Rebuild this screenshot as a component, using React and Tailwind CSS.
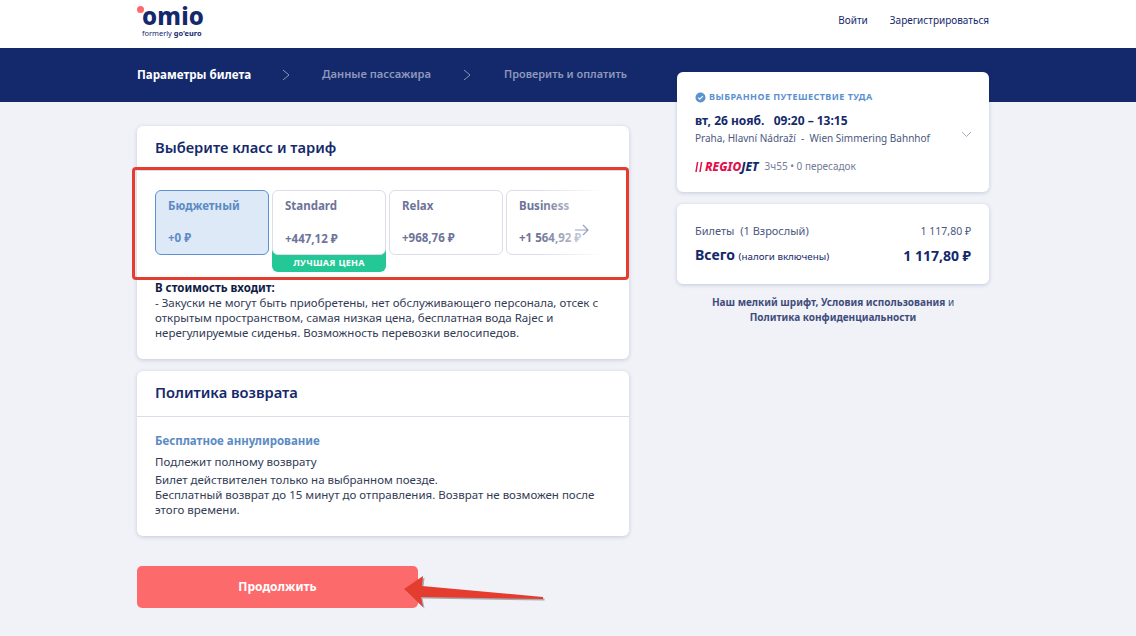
const font = { fontFamily: '"Noto Sans", sans-serif' };

const Fare = ({ name, price, active, best }) => {
  return (
    <div className="relative w-[114px] shrink-0">
      {best && (
        <div className="absolute left-0 top-[40px] w-full h-[42px] rounded-[6px] bg-[#24c796] flex items-end justify-center pb-[2px] text-[9px] leading-[14px] font-bold tracking-[0.3px] text-white">
          ЛУЧШАЯ ЦЕНА
        </div>
      )}
      <div
        className={`relative h-[65px] rounded-[6px] border pl-[12px] pt-[7px] text-[11.5px] font-bold ${
          active
            ? "bg-[#dde9f7] border-[#5c92cf] text-[#5c8ac4]"
            : "bg-white border-[#dcdde9] text-[#6d7499]"
        }`}
      >
        <div className="leading-[16px]">{name}</div>
        <div className={`leading-[16px] whitespace-nowrap ${best ? "mt-[17px]" : "mt-[16px]"}`}>{price}</div>
      </div>
    </div>
  );
};

export default function App() {
  return (
    <div style={font} className="relative w-[1136px] h-[636px] overflow-hidden bg-[#f0f2f7] text-[#14296b]">
      <header className="h-[48px] bg-white">
        <div className="mx-[137px] w-[852px] h-full flex justify-between">
          <div className="relative w-[80px] pt-[5px]">
            <span className="absolute left-0 top-[6px] w-[7px] h-[7px] rounded-full bg-[#fc6a6c]" />
            <div className="pl-[5px] text-[24px] leading-[22px] font-extrabold tracking-[0.2px]">omio</div>
            <div className="pl-[5px] mt-[1px] text-[7.4px] leading-[10px] whitespace-nowrap">
              formerly <b>go'euro</b>
            </div>
          </div>
          <nav className="flex items-center gap-[22px] text-[10px] pb-[7px]">
            <span>Войти</span>
            <span>Зарегистрироваться</span>
          </nav>
        </div>
      </header>

      <div className="h-[54px] bg-[#14296b]">
        <div className="mx-[137px] h-full flex items-center text-[10.9px] font-semibold pb-[1px]">
          <span className="w-[145px] text-[11.6px] font-bold text-white">Параметры билета</span>
          <svg width="8" height="12" viewBox="0 0 8 12" fill="none" stroke="#8a96bb" strokeWidth="1">
            <path d="M1 1l6 5-6 5" />
          </svg>
          <span className="ml-[32px] w-[141px] text-[11.2px] text-[#8d98bb]">Данные пассажира</span>
          <svg width="8" height="12" viewBox="0 0 8 12" fill="none" stroke="#8a96bb" strokeWidth="1">
            <path d="M1 1l6 5-6 5" />
          </svg>
          <span className="ml-[33px] text-[#8d98bb]">Проверить и оплатить</span>
        </div>
      </div>

      <div className="mx-[137px] w-[852px] flex justify-between items-start">
        <main className="w-[492px] pt-[24px]">
          <section className="h-[233px] rounded-[6px] bg-white shadow-[0_1px_4px_rgba(20,41,107,0.2)]">
            <h2 className="h-[45px] pl-[18px] pb-[2px] flex items-center text-[14.7px] font-semibold border-b border-[#dcdde9]">
              Выберите класс и тариф
            </h2>
            <div className="relative pl-[18px] pt-[19px] flex gap-[3px] overflow-hidden w-[468px] h-[110px]">
              <Fare name="Бюджетный" price="+0 ₽" active />
              <Fare name="Standard" price="+447,12 ₽" best />
              <Fare name="Relax" price="+968,76 ₽" />
              <Fare name="Business" price="+1 564,92 ₽" />
              <div className="absolute right-0 top-[19px] w-[66px] h-[65px] bg-gradient-to-r from-white/0 to-white" />
              <svg className="absolute left-[438px] top-[53px]" width="14" height="12" viewBox="0 0 14 12" fill="none" stroke="#9aa0bd" strokeWidth="1.2">
                <path d="M0 6h13M8 1l5 5-5 5" />
              </svg>
            </div>
            <div className="pl-[18px] pr-[20px] mt-[-1px] text-[11.5px] leading-[15px]">
              <div className="font-bold text-[#0f1c45]">В стоимость входит:</div>
              <p className="text-[#333b55]">
                - Закуски не могут быть приобретены, нет обслуживающего персонала, отсек с открытым пространством, самая низкая цена, бесплатная вода Rajec и нерегулируемые сиденья. Возможность перевозки велосипедов.
              </p>
            </div>
          </section>

          <section className="mt-[12px] h-[165px] rounded-[6px] bg-white shadow-[0_1px_4px_rgba(20,41,107,0.2)]">
            <h2 className="h-[46px] pl-[18px] pb-[2px] flex items-center text-[14.7px] font-semibold border-b border-[#dcdde9]">
              Политика возврата
            </h2>
            <div className="pl-[18px] pr-[20px] pt-[16px] text-[11.5px] leading-[15px] text-[#333b55]">
              <div className="font-bold text-[#5c8ac4]">Бесплатное аннулирование</div>
              <div className="mt-[6px]">Подлежит полному возврату</div>
              <p className="mt-[3px]">
                Билет действителен только на выбранном поезде.
                <br />
                Бесплатный возврат до 15 минут до отправления. Возврат не возможен после этого времени.
              </p>
            </div>
          </section>

          <button className="mt-[30px] w-[281px] h-[42px] rounded-[5px] bg-[#fc6a6c] text-white text-[12px] font-bold">
            Продолжить
          </button>
        </main>

        <aside className="w-[312px] -mt-[30px]">
          <section className="relative h-[120px] rounded-[6px] bg-white pl-[18px] pt-[18px] shadow-[0_1px_4px_rgba(20,41,107,0.2)]">
            <div className="flex items-center gap-[3px] text-[9px] leading-[14px] font-bold tracking-[0.45px] text-[#5c92cf]">
              <svg width="11" height="11" viewBox="0 0 11 11">
                <circle cx="5.5" cy="5.5" r="5" fill="#5c92cf" />
                <path d="M3.2 5.6l1.6 1.6 3-3" fill="none" stroke="#fff" strokeWidth="1.1" />
              </svg>
              ВЫБРАННОЕ ПУТЕШЕСТВИЕ ТУДА
            </div>
            <div className="mt-[9px] text-[12px] leading-[16px] font-bold whitespace-pre">вт, 26 нояб.   09:20 – 13:15</div>
            <div className="mt-[2px] text-[10px] leading-[15px] text-[#4c5880] whitespace-pre">Praha, Hlavní Nádraží  -  Wien Simmering Bahnhof</div>
            <div className="mt-[13px] flex items-center gap-[6px]">
              <span className="flex items-center text-[12px] leading-[14px] font-extrabold italic">
                <svg className="mr-[2px]" width="8" height="12" viewBox="0 0 8 12" fill="none" stroke="#e0104f" strokeWidth="1.5">
                  <path d="M2.6 1L1 11M6.6 1L5 11" />
                </svg>
                <span className="text-[#e0104f]">REGIO</span>
                <span className="text-[#14296b]">JET</span>
              </span>
              <span className="text-[10px] text-[#747b9a]">3ч55 • 0 пересадок</span>
            </div>
            <svg className="absolute right-[17px] top-[59px]" width="11" height="7" viewBox="0 0 11 7" fill="none" stroke="#a4a9c3" strokeWidth="1">
              <path d="M1 1l4.5 4.5L10 1" />
            </svg>
          </section>

          <section className="mt-[12px] h-[80px] rounded-[6px] bg-white px-[18px] pt-[19px] shadow-[0_1px_4px_rgba(20,41,107,0.2)]">
            <div className="flex justify-between text-[11px] leading-[16px] text-[#4c5880] whitespace-pre">
              <span>Билеты  (1 Взрослый)</span>
              <span className="text-[10.5px]">1 117,80 ₽</span>
            </div>
            <div className="mt-[7px] flex justify-between items-center font-bold leading-[18px]">
              <span className="text-[14px]">
                Всего <span className="text-[9.8px] font-normal">(налоги включены)</span>
              </span>
              <span className="text-[14px]">1 117,80 ₽</span>
            </div>
          </section>

          <p className="mt-[11px] text-center text-[10px] leading-[15px] font-bold text-[#3f4c7c]">
            Наш мелкий шрифт, Условия использования <span className="font-normal">и</span>
            <br />
            Политика конфиденциальности
          </p>
        </aside>
      </div>

      <div className="absolute left-[132px] top-[167px] w-[497px] h-[113px] rounded-[4px] border-[3px] border-[#e53c30]" />
      <svg className="absolute left-[400px] top-[570px]" width="150" height="42" viewBox="0 0 150 42">
        <path d="M4 19L23 6l-1 10 121 11v2L21 27l2 10z" fill="#a9aab0" transform="translate(1.5 1.5)" />
        <path d="M4 19L23 6l-1 10 121 11v2L21 27l2 10z" fill="#e53c30" />
      </svg>
    </div>
  );
}
